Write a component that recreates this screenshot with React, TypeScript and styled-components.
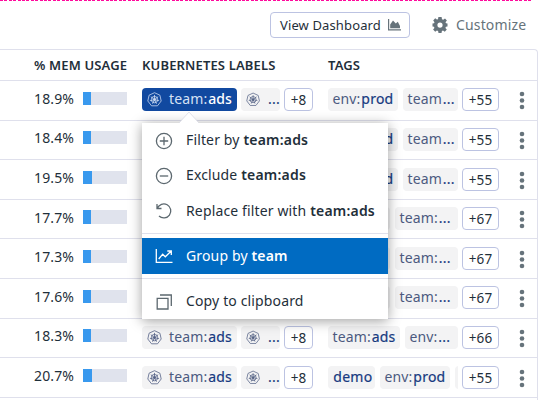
import React from "react";
import styled, { createGlobalStyle } from "styled-components";

const Global = createGlobalStyle`
  * { box-sizing: border-box; }
  body {
    margin: 0;
    background: #fff;
    color: #1f2f3a;
    font-family: "Noto Sans", "Open Sans", sans-serif;
    font-size: 14px;
    letter-spacing: 0.14px;
    overflow: hidden;
  }
`;

const Page = styled.div`
  position: relative;
  width: 553px;
  height: 400px;
  overflow: hidden;
`;

const DashedRule = styled.div`
  width: 531px;
  height: 1px;
  background: repeating-linear-gradient(90deg, #ff0a9c 0 3px, #fff 3px 4.4px);
`;

const Toolbar = styled.div`
  display: flex;
  align-items: center;
  height: 48px;
  padding-left: 270px;
`;

const DashboardButton = styled.button`
  display: flex;
  align-items: center;
  justify-content: space-between;
  width: 140px;
  height: 26px;
  padding: 0 8px 0 9px;
  border: 1px solid #bcc3e2;
  border-radius: 4px;
  background: #fff;
  color: #1f2f3a;
  font: 13px "Noto Sans", sans-serif;
  letter-spacing: 0.13px;
  white-space: nowrap;
`;

const CustomizeButton = styled.div`
  display: flex;
  align-items: center;
  gap: 8px;
  margin-left: 22px;
  color: #66737b;
  letter-spacing: 0.15px;
  & span { padding-bottom: 1px; }
`;

const Table = styled.div`
  width: 538px;
  height: 360px;
  border: 1px solid #dfe0ec;
  border-left: 0;
  border-bottom: 0;
  border-top-right-radius: 4px;
`;

const HeaderRow = styled.div`
  display: grid;
  grid-template-columns: 142px 186px 1fr;
  align-items: center;
  height: 31px;
  border-bottom: 1px solid #dfe0ec;
  font-size: 13px;
  font-weight: 600;
  letter-spacing: 0.15px;
  white-space: nowrap;
  & > :first-child { padding-left: 34px; }
`;

const Row = styled.div<{ $height: number; $pad: number }>`
  display: grid;
  grid-template-columns: 83px 59px 186px 134px 1fr;
  align-items: start;
  height: ${(p) => p.$height}px;
  padding-top: ${(p) => p.$pad}px;
  border-bottom: 1px solid #dfe0ec;
`;

const Percent = styled.div<{ $drop?: boolean }>`
  padding-left: 34px;
  padding-top: ${(p) => (p.$drop ? 1 : 0)}px;
  line-height: 20px;
`;

const Meter = styled.div<{ $offset: number; $tall?: boolean }>`
  width: 44px;
  height: ${(p) => (p.$tall ? 14 : 13)}px;
  margin-top: ${(p) => p.$offset}px;
  background: #e0e3ed;
`;

const MeterFill = styled.div`
  height: 100%;
  background: #3999ee;
`;

const Cell = styled.div`
  display: flex;
  gap: 4px;
`;

const TagCell = styled.div`
  display: flex;
  width: 130px;
  gap: 5px;
  overflow: hidden;
`;

const Tag = styled.span<{ $active?: boolean; $width: number; $icon?: boolean }>`
  display: flex;
  align-items: center;
  flex: none;
  width: ${(p) => p.$width}px;
  height: 23px;
  padding-left: ${(p) => (p.$icon ? 5 : 4.5)}px;
  gap: ${(p) => (p.$icon ? 7 : 0)}px;
  border-radius: 4px;
  overflow: hidden;
  white-space: nowrap;
  line-height: 20px;
  background: ${(p) => (p.$active ? "#1149a0" : "#f3f3f4")};
  color: ${(p) => (p.$active ? "#d5e1f5" : "#4c5a80")};
  & span { padding-bottom: 2px; }
  & b {
    font-weight: ${(p) => (p.$active ? 500 : 400)};
    -webkit-text-stroke: ${(p) => (p.$active ? 0 : 0.2)}px currentColor;
    letter-spacing: ${(p) => (p.$active ? 0.1 : 0.25)}px;
    margin-left: 0.8px;
    color: ${(p) => (p.$active ? "#fff" : "#173a80")};
  }
`;

const More = styled.span<{ $width: number }>`
  display: flex;
  align-items: center;
  justify-content: center;
  flex: none;
  width: ${(p) => p.$width}px;
  height: 23px;
  border: 1px solid #bcc3e2;
  border-radius: 4px;
  background: #fff;
  font-size: 13.5px;
`;

const RowEnd = styled.div`
  display: flex;
  align-items: center;
  gap: 20px;
`;

const Menu = styled.div`
  position: absolute;
  left: 142px;
  top: 123px;
  width: 246px;
  height: 196px;
  background: #fff;
  box-shadow: 0 2px 12px rgba(0, 0, 0, 0.38);
`;

const Pointer = styled.svg`
  position: absolute;
  left: 37px;
  top: -11px;
`;

const MenuGroup = styled.div<{ $height: number; $pad: number }>`
  height: ${(p) => p.$height}px;
  padding-top: ${(p) => p.$pad}px;
  & + & { border-top: 1px solid #dfe0ec; }
`;

const MenuItem = styled.div<{ $active?: boolean; $height?: number }>`
  display: flex;
  align-items: center;
  height: ${(p) => p.$height ?? 36}px;
  padding-left: 13px;
  gap: 13px;
  white-space: nowrap;
  color: ${(p) => (p.$active ? "#fff" : "#1f2f3a")};
  background: ${(p) => (p.$active ? "#006bc2" : "transparent")};
  & span { padding-bottom: 1.5px; }
  & b { font-weight: 600; letter-spacing: 0.2px; }
  & svg { flex: none; color: ${(p) => (p.$active ? "#fff" : "#5c686f")}; }
`;

const KubeIcon = () => (
  <svg width="15" height="15" viewBox="0 0 15 15" fill="none" stroke="currentColor" strokeWidth="0.75">
    <path d="M7.5.7 12.9 3.2 14.2 9 10.5 13.8H4.5L.8 9 2.1 3.2Z" strokeLinejoin="round" />
    <circle cx="7.5" cy="7.6" r="3.2" />
    <circle cx="7.5" cy="7.6" r="1" />
    <path d="M7.5 7.6V2.9M7.5 7.6 11.2 4.7M7.5 7.6 12.1 8.7M7.5 7.6 9.5 11.8M7.5 7.6 5.5 11.8M7.5 7.6 2.9 8.7M7.5 7.6 3.8 4.7" />
  </svg>
);

const AreaIcon = () => (
  <svg width="13" height="12" viewBox="0 0 13 12" fill="#66737b">
    <path d="M0 0H1.2V10.2H13V11.4H0Z" />
    <path d="M2.2 9.2V5.5L5 1.5 7.8 4.5 9.8 2.8 12 7V9.2Z" />
  </svg>
);

const GearIcon = () => (
  <svg width="16" height="16" viewBox="0 0 16 16" fill="currentColor">
    <path
      fillRule="evenodd"
      d="M6.4 0H9.6L10 2.2 11.2 2.7 13 1.4 14.9 3.6 13.5 5.2 14 6.3 15.5 6.6V9.5L13.9 9.8 13.4 11 14.8 12.6 12.8 14.8 11 13.5 9.9 14 9.5 16H6.5L6.1 14 4.9 13.5 3.2 14.8 1.1 12.6 2.4 11 2 9.8.5 9.5V6.6L2 6.3 2.5 5.2 1.2 3.5 3.2 1.3 4.9 2.6 6 2.2ZM8 5.5a2.6 2.6 0 1 0 0 5.2 2.6 2.6 0 0 0 0-5.2Z"
    />
  </svg>
);

const Kebab = () => (
  <svg width="6" height="23" viewBox="0 0 6 23" fill="#66737b">
    <circle cx="3" cy="6" r="2.3" />
    <circle cx="3" cy="12.5" r="2.3" />
    <circle cx="3" cy="19" r="2.3" />
  </svg>
);

const iconProps = {
  width: 18,
  height: 18,
  viewBox: "0 0 18 18",
  fill: "none",
  stroke: "currentColor",
  strokeWidth: 1.3,
};

const PlusIcon = () => (
  <svg {...iconProps}><circle cx="9" cy="9" r="7.6" /><path d="M9 4.8V13.2M4.8 9H13.2" /></svg>
);
const MinusIcon = () => (
  <svg {...iconProps}><circle cx="9" cy="9" r="7.6" /><path d="M4.8 9H13.2" /></svg>
);
const UndoIcon = () => (
  <svg {...iconProps}><path d="M2 2V6.5H6.5M2.3 6.3A7 7 0 1 1 4 14" /></svg>
);
const TrendIcon = () => (
  <svg {...iconProps}><path d="M1.3 2V15.3H17.5M3.7 12 7.7 7.2 10.3 9.8 16 4.2M12.3 4H16.3V8" /></svg>
);
const CopyIcon = () => (
  <svg {...iconProps}><path d="M2.2 5.4H13V16H2.2ZM5 2H16.3V13" /></svg>
);

type TagData = { k?: string; v: string; w: number };
type RowData = {
  pct: string; height: number; pad: number; bar: number; fill: number;
  drop?: boolean; tall?: boolean; tags: TagData[]; more: string;
};

const prod: TagData[] = [{ k: "env:", v: "prod", w: 70 }, { k: "team", v: "...", w: 55 }];
const long: TagData[] = [{ k: "env:", v: "...", w: 62 }, { k: "team:", v: "...", w: 63 }];

const rows: RowData[] = [
  { pct: "18.9%", height: 40, pad: 7, bar: 4, fill: 8.3, drop: true, tags: prod, more: "+55" },
  { pct: "18.4%", height: 39, pad: 7, bar: 3, fill: 8.1, tags: prod, more: "+55" },
  { pct: "19.5%", height: 40, pad: 8, bar: 3, fill: 8.6, tags: prod, more: "+55" },
  { pct: "17.7%", height: 39, pad: 7, bar: 3, fill: 7.8, drop: true, tall: true, tags: long, more: "+67" },
  { pct: "17.3%", height: 40, pad: 8, bar: 3, fill: 7.6, tags: long, more: "+67" },
  { pct: "17.6%", height: 40, pad: 7, bar: 4, fill: 7.7, drop: true, tags: long, more: "+67" },
  { pct: "18.3%", height: 39, pad: 7, bar: 3, fill: 8, tags: [{ k: "team:", v: "ads", w: 72 }, { k: "env:", v: "...", w: 53 }], more: "+66" },
  { pct: "20.7%", height: 40, pad: 8, bar: 3, fill: 9, tags: [{ v: "demo", w: 47 }, { k: "env:", v: "prod", w: 70 }, { v: "", w: 10 }], more: "+55" },
];

export default function App() {
  return (
    <Page>
      <Global />
      <DashedRule />
      <Toolbar>
        <DashboardButton>View Dashboard <AreaIcon /></DashboardButton>
        <CustomizeButton><GearIcon /><span>Customize</span></CustomizeButton>
      </Toolbar>
      <Table>
        <HeaderRow>
          <span>% MEM USAGE</span>
          <span>KUBERNETES LABELS</span>
          <span>TAGS</span>
        </HeaderRow>
        {rows.map((r, i) => (
          <Row key={i} $height={r.height} $pad={r.pad}>
            <Percent $drop={r.drop}>{r.pct}</Percent>
            <Meter $offset={r.bar} $tall={r.tall}><MeterFill style={{ width: r.fill }} /></Meter>
            <Cell>
              <Tag $width={95} $active={i === 0} $icon><KubeIcon /><span>team:<b>ads</b></span></Tag>
              <Tag $width={39} $icon><KubeIcon /><span><b>...</b></span></Tag>
              <More $width={29}>+8</More>
            </Cell>
            <TagCell>
              {r.tags.map((t, j) => (
                <Tag key={j} $width={t.w}><span>{t.k}<b>{t.v}</b></span></Tag>
              ))}
            </TagCell>
            <RowEnd><More $width={37}>{r.more}</More><Kebab /></RowEnd>
          </Row>
        ))}
      </Table>
      <Menu>
        <Pointer width="20" height="12" viewBox="0 0 20 12">
          <path d="M0 11 10 0 20 11V12H0Z" fill="#fff" />
          <path d="M0 11 10 0 20 11" fill="none" stroke="#d9dbe5" strokeWidth="0.8" />
        </Pointer>
        <MenuGroup $height={110} $pad={0}>
          <MenuItem $height={35}><PlusIcon /><span>Filter by <b>team:ads</b></span></MenuItem>
          <MenuItem $height={35}><MinusIcon /><span>Exclude <b>team:ads</b></span></MenuItem>
          <MenuItem><UndoIcon /><span>Replace filter with <b>team:ads</b></span></MenuItem>
        </MenuGroup>
        <MenuGroup $height={45} $pad={4}>
          <MenuItem $active><TrendIcon /><span>Group by <b>team</b></span></MenuItem>
        </MenuGroup>
        <MenuGroup $height={41} $pad={4}>
          <MenuItem $height={37}><CopyIcon /><span>Copy to clipboard</span></MenuItem>
        </MenuGroup>
      </Menu>
    </Page>
  );
}
